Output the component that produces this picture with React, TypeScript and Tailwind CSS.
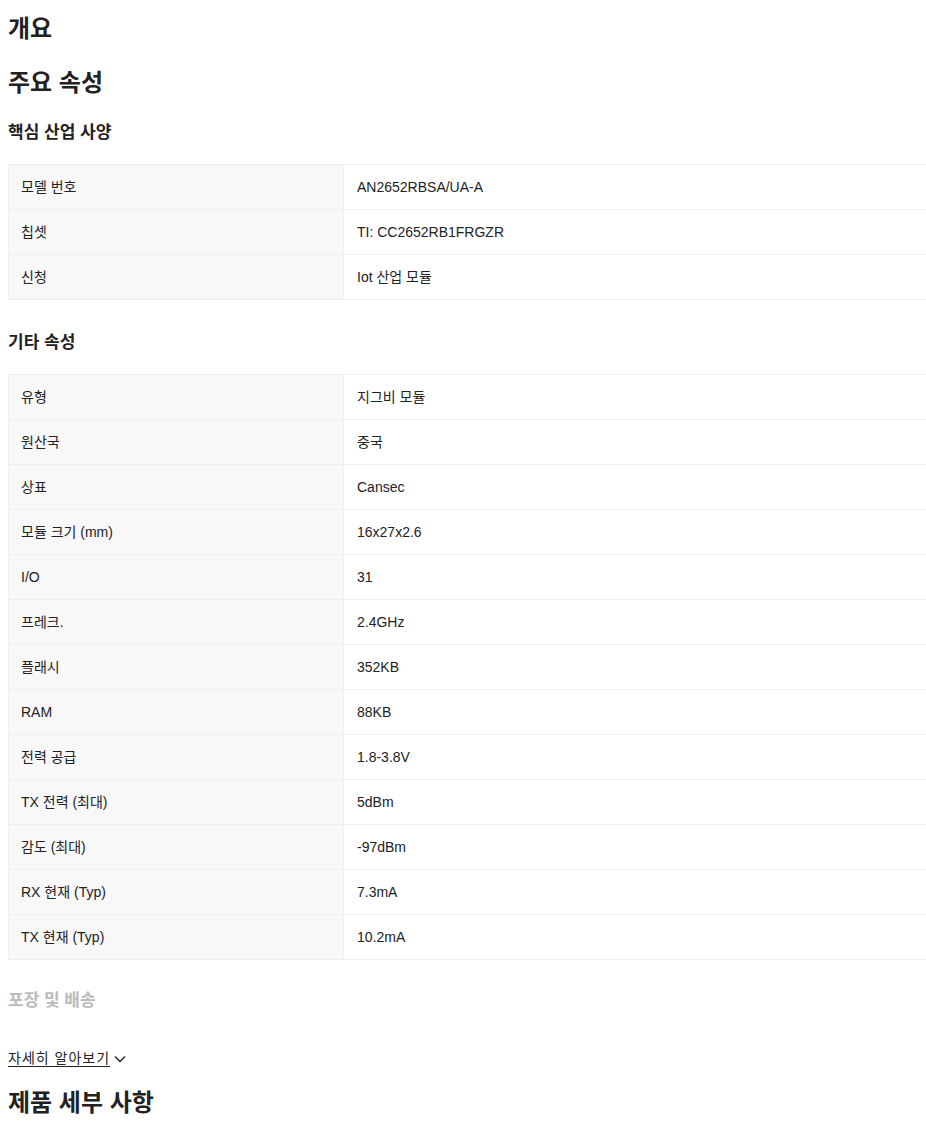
import React from "react";

const font = { fontFamily: '"Liberation Sans", "Noto Sans CJK KR", Arial, sans-serif' };

type Row = [string, string];

const core: Row[] = [
  ["모델 번호", "AN2652RBSA/UA-A"],
  ["칩셋", "TI: CC2652RB1FRGZR"],
  ["신청", "Iot 산업 모듈"],
];

const other: Row[] = [
  ["유형", "지그비 모듈"],
  ["원산국", "중국"],
  ["상표", "Cansec"],
  ["모듈 크기 (mm)", "16x27x2.6"],
  ["I/O", "31"],
  ["프레크.", "2.4GHz"],
  ["플래시", "352KB"],
  ["RAM", "88KB"],
  ["전력 공급", "1.8-3.8V"],
  ["TX 전력 (최대)", "5dBm"],
  ["감도 (최대)", "-97dBm"],
  ["RX 현재 (Typ)", "7.3mA"],
  ["TX 현재 (Typ)", "10.2mA"],
];

function Table({ rows }: { rows: Row[] }) {
  return (
    <div className="border-t border-[#efefef] w-[918px]">
      {rows.map(([k, v]) => (
        <div key={k} className="flex h-[45px] border-b border-[#efefef] text-[14px] text-[#222]">
          <div className="w-[336px] shrink-0 bg-[#f8f8f8] border-l border-r border-[#efefef] px-3 flex items-center">
            {k}
          </div>
          <div className="flex-1 px-[13px] flex items-center bg-white">{v}</div>
        </div>
      ))}
    </div>
  );
}

export default function App() {
  return (
    <div className="bg-white min-h-[1130px] overflow-hidden pl-2 text-[#222]" style={font}>
      <h2 className="pt-[15px] text-[24px] leading-[28px] font-bold">개요</h2>
      <h2 className="mt-[26px] text-[24px] leading-[28px] font-bold">주요 속성</h2>
      <h3 className="mt-[24px] text-[17px] leading-[24px] font-bold">핵심 산업 사양</h3>
      <div className="mt-[19px]">
        <Table rows={core} />
      </div>
      <h3 className="mt-[31px] text-[17px] leading-[24px] font-bold">기타 속성</h3>
      <div className="mt-[19px]">
        <Table rows={other} />
      </div>
      <h3 className="mt-[29px] text-[17px] leading-[24px] font-bold text-[#bbbbbb]">포장 및 배송</h3>
      <div className="mt-[35px] flex items-center text-[14px] leading-[20px] text-[#222]">
        <span className="underline underline-offset-[3px] tracking-[1px]">자세히 알아보기</span>
        <svg width="14" height="14" viewBox="0 0 14 14" className="ml-[3px] mt-[1px]" fill="none">
          <path d="M2 4.5 L7 9.5 L12 4.5" stroke="#222" strokeWidth="1.4" />
        </svg>
      </div>
      <h2 className="mt-[21px] text-[24px] leading-[28px] font-bold">제품 세부 사항</h2>
    </div>
  );
}
